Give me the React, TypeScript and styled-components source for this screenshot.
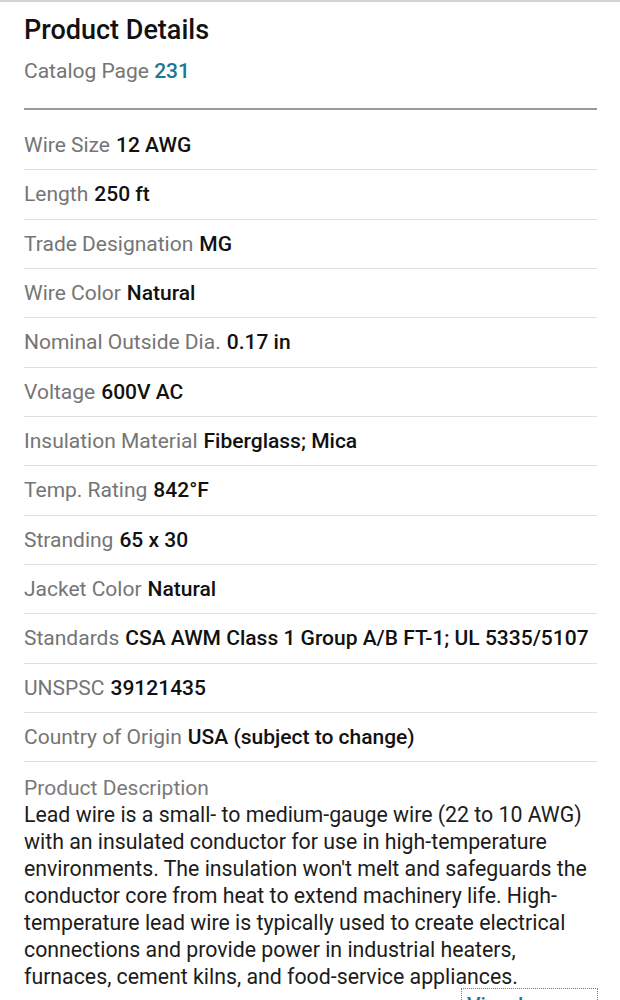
import React from 'react';
import styled, { createGlobalStyle } from 'styled-components';

const GlobalStyle = createGlobalStyle`
  html, body {
    margin: 0;
    padding: 0;
    background: #fff;
    font-family: Roboto, "Liberation Sans", Arial, sans-serif;
  }
`;

type Spec = { label: string; value: string };

const specs: Spec[] = [
  { label: 'Wire Size', value: '12 AWG' },
  { label: 'Length', value: '250 ft' },
  { label: 'Trade Designation', value: 'MG' },
  { label: 'Wire Color', value: 'Natural' },
  { label: 'Nominal Outside Dia.', value: '0.17 in' },
  { label: 'Voltage', value: '600V AC' },
  { label: 'Insulation Material', value: 'Fiberglass; Mica' },
  { label: 'Temp. Rating', value: '842°F' },
  { label: 'Stranding', value: '65 x 30' },
  { label: 'Jacket Color', value: 'Natural' },
  { label: 'Standards', value: 'CSA AWM Class 1 Group A/B FT-1; UL 5335/5107' },
  { label: 'UNSPSC', value: '39121435' },
  { label: 'Country of Origin', value: 'USA (subject to change)' },
];

const description =
  "Lead wire is a small- to medium-gauge wire (22 to 10 AWG) with an insulated conductor for use in high-temperature environments. The insulation won't melt and safeguards the conductor core from heat to extend machinery life. High-temperature lead wire is typically used to create electrical connections and provide power in industrial heaters, furnaces, cement kilns, and food-service appliances.";

const Page = styled.div`
  border-top: 2px solid #d4d4d4;
  padding: 0 23px 0 24px;
  overflow: hidden;
`;

const Title = styled.h2`
  margin: 13px 0 0;
  font-size: 27px;
  line-height: 31px;
  font-weight: 500;
  color: #111;
`;

const Catalog = styled.div`
  margin-top: 12px;
  font-size: 21px;
  line-height: 27px;
  color: #757575;
  padding-bottom: 23px;
  border-bottom: 2px solid #9a9a9a;
`;

const PageLink = styled.span`
  color: #1b7896;
  font-weight: 500;
`;

const SpecList = styled.div`
  padding-top: 11px;
`;

const Row = styled.div`
  height: 48.33px;
  display: flex;
  align-items: center;
  border-bottom: 1px solid #e0e0e0;
  font-size: 21px;
  white-space: nowrap;
`;

const Label = styled.span`
  color: #757575;
`;

const Value = styled.span`
  color: #111;
  font-weight: 500;
  margin-left: 6px;
`;

const Description = styled.div`
  padding-top: 13px;
  font-size: 21.3px;
  line-height: 26.9px;
`;

const DescLabel = styled.div`
  color: #7a7a7a;
  font-size: 21px;
`;

const DescText = styled.p`
  margin: 0;
  color: #1c1c1c;
`;

const Actions = styled.div`
  display: flex;
  justify-content: flex-end;
`;

const ToggleButton = styled.button`
  background: none;
  border: none;
  outline: 1px dotted #3f8ea6;
  width: 135px;
  padding: 4px 5px;
  text-align: left;
  font-family: inherit;
  font-size: 21px;
  font-weight: 500;
  color: #1b7896;
  margin-top: -2px;
`;

export default function App() {
  return (
    <Page>
      <GlobalStyle />
      <Title>Product Details</Title>
      <Catalog>
        Catalog Page <PageLink>231</PageLink>
      </Catalog>
      <SpecList>
        {specs.map((s) => (
          <Row key={s.label}>
            <Label>{s.label}</Label>
            <Value>{s.value}</Value>
          </Row>
        ))}
      </SpecList>
      <Description>
        <DescLabel>Product Description</DescLabel>
        <DescText>{description}</DescText>
      </Description>
      <Actions>
        <ToggleButton>View less</ToggleButton>
      </Actions>
    </Page>
  );
}
